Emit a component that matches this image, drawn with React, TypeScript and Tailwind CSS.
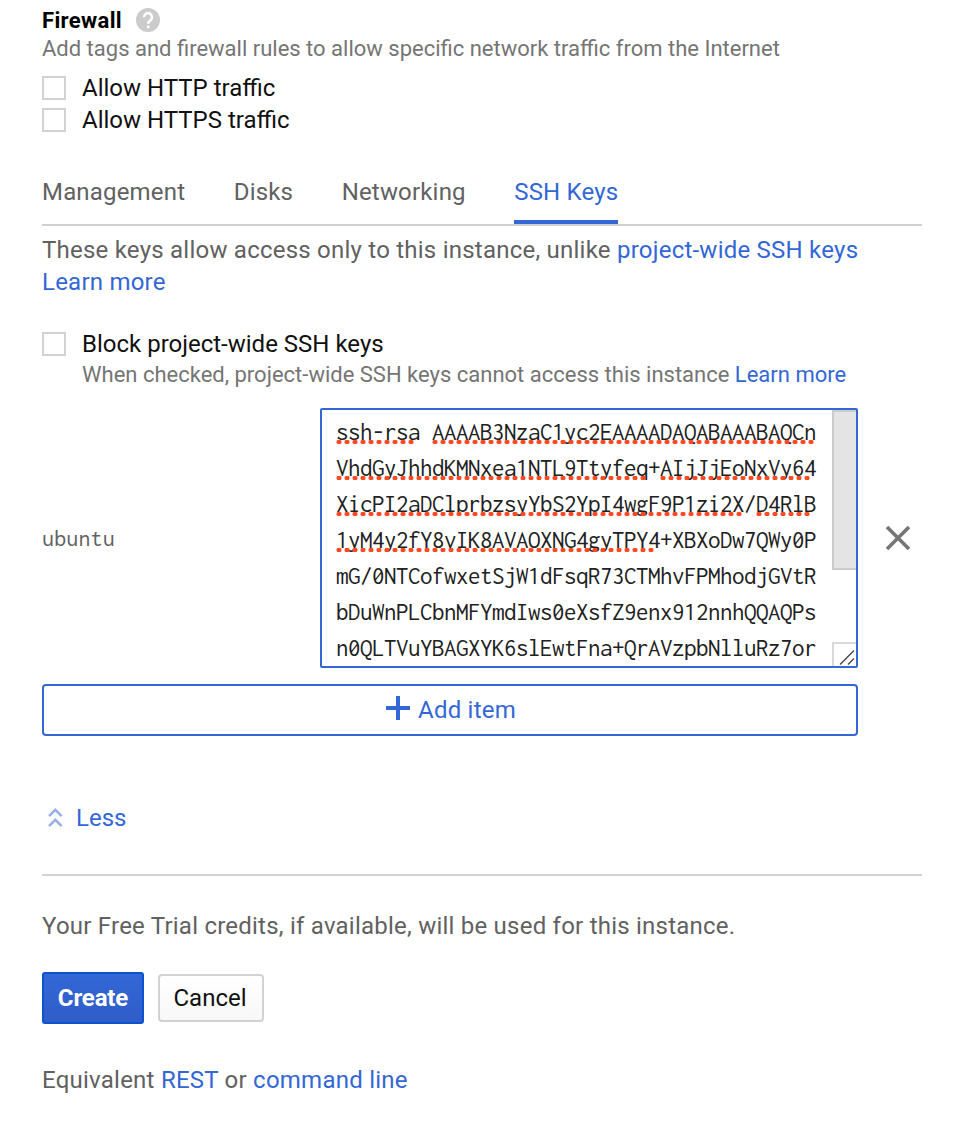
import React from 'react'

type Mark = { left: string; width: string }

const keyLines: { text: string; marks: Mark[] }[] = [
  {
    text: 'ssh-rsa AAAAB3NzaC1yc2EAAAADAQABAAABAQCn',
    marks: [
      { left: 'left-0', width: 'w-[80px]' },
      { left: 'left-[96px]', width: 'w-[384px]' },
    ],
  },
  {
    text: 'VhdGyJhhdKMNxea1NTL9Ttyfeq+AIjJjEoNxVy64',
    marks: [
      { left: 'left-0', width: 'w-[312px]' },
      { left: 'left-[324px]', width: 'w-[152px]' },
    ],
  },
  {
    text: 'XicPI2aDClprbzsyYbS2YpI4wgF9P1zi2X/D4RlB',
    marks: [
      { left: 'left-0', width: 'w-[408px]' },
      { left: 'left-[420px]', width: 'w-[56px]' },
    ],
  },
  {
    text: '1yM4y2fY8vIK8AVAOXNG4gyTPY4+XBXoDw7QWy0P',
    marks: [{ left: 'left-0', width: 'w-[320px]' }],
  },
  { text: 'mG/0NTCofwxetSjW1dFsqR73CTMhvFPMhodjGVtR', marks: [] },
  { text: 'bDuWnPLCbnMFYmdIws0eXsfZ9enx912nnhQQAQPs', marks: [] },
  { text: 'n0QLTVuYBAGXYK6slEwtFna+QrAVzpbNlluRz7or', marks: [] },
]

function Checkbox() {
  return <span className="h-6 w-6 shrink-0 border-2 border-[#d2d2d2] bg-white" />
}

function Link({ children }: { children: React.ReactNode }) {
  return (
    <a href="#" className="text-[#3367d6]">
      {children}
    </a>
  )
}

function HelpIcon() {
  return (
    <svg width="24" height="24" viewBox="0 0 24 24" className="-mt-0.5 ml-[14px]">
      <circle cx="12" cy="12" r="12" fill="#cbcbcb" />
      <path d="M8 9.2a4 4 0 1 1 6.7 2.9c-1.6 1.3-2.5 1.8-2.5 3.6" fill="none" stroke="#fff" strokeWidth="2.5" />
      <rect x="10.9" y="17.6" width="2.6" height="2.6" fill="#fff" />
    </svg>
  )
}

function SshKeyField() {
  return (
    <div className="relative h-[260px] w-[538px] overflow-hidden rounded-[2px] border-2 border-[#3367d6] bg-white pl-[14px] pt-1">
      <div className="font-['Inconsolata','Noto_Sans_Mono_CJK_SC',monospace] text-[25px] leading-9 tracking-[-0.5px] text-[#212121]">
        {keyLines.map((line) => (
          <div key={line.text} className="relative h-9 whitespace-pre">
            {line.text}
            {line.marks.map((m) => (
              <span
                key={m.left}
                className={`absolute top-[26px] h-1 bg-[radial-gradient(circle_at_3px_2px,#ff4a1f_2px,transparent_3px)] bg-[length:8px_4px] ${m.left} ${m.width}`}
              />
            ))}
          </div>
        ))}
      </div>
      <div className="absolute right-0 top-0 h-[160px] w-6 border-2 border-r-0 border-[#cbcbcb] bg-[#e4e4e4]" />
      <div className="absolute bottom-0 right-0 h-6 w-6 border-l-2 border-t-2 border-[#d9d9d9] bg-white">
        <svg width="22" height="22" viewBox="0 0 22 22">
          <path d="M6 20.500 20 6.500M14 20.500l6-6" stroke="#444" strokeWidth="1.300" />
        </svg>
      </div>
    </div>
  )
}

export default function App() {
  return (
    <main className="h-[1140px] w-[960px] overflow-hidden bg-white pl-[42px] pr-[38px] pt-[5px] font-['Roboto',sans-serif] text-[24px] leading-8 text-[#616161]">
      <section>
        <div className="flex h-8 items-center text-[22px] font-bold tracking-[0.35px] text-black">
          Firewall
          <HelpIcon />
        </div>
        <p className="h-6 text-[22px] leading-6 text-[#757575]">
          Add tags and firewall rules to allow specific network traffic from the Internet
        </p>
        <div className="mt-[11px] text-[#111]">
          <label className="flex h-8 items-center gap-4">
            <Checkbox />
            Allow HTTP traffic
          </label>
          <label className="flex h-8 items-center gap-4">
            <Checkbox />
            Allow HTTPS traffic
          </label>
        </div>
      </section>

      <nav className="mt-10 flex h-[50px] gap-[48.5px] border-b-2 border-[#d0d0d0] tracking-[0.18px]">
        <span className="h-12">Management</span>
        <span className="h-12">Disks</span>
        <span className="h-12">Networking</span>
        <span className="h-12 border-b-4 border-[#3367d6] text-[#3367d6]">SSH Keys</span>
      </nav>

      <section>
        <p className="mt-2 whitespace-nowrap tracking-[0.23px]">
          These keys allow access only to this instance, unlike <Link>project-wide SSH keys</Link>
          <br />
          <Link>Learn more</Link>
        </p>
        <label className="mt-[30px] flex h-8 items-center gap-4 text-[#111]">
          <Checkbox />
          Block project-wide SSH keys
        </label>
        <p className="ml-10 mt-[3px] h-6 whitespace-nowrap text-[22px] leading-6 text-[#757575]">
          When checked, project-wide SSH keys cannot access this instance <Link>Learn more</Link>
        </p>
        <div className="mt-[21px] flex items-center">
          <span className="w-[278px] font-['Inconsolata','Noto_Sans_Mono_CJK_SC',monospace] text-[24px] tracking-[0.15px]">
            ubuntu
          </span>
          <SshKeyField />
          <svg width="26" height="26" viewBox="0 0 26 26" className="ml-[27px]">
            <path d="M2 2l22 22M24 2 2 24" stroke="#757575" strokeWidth="3.6" />
          </svg>
        </div>
        <button className="mt-4 flex h-[52px] w-[816px] items-center justify-center gap-2 rounded-[4px] border-2 border-[#3367d6] pl-0.5 tracking-[0.22px] text-[#3367d6]">
          <svg width="24" height="24" viewBox="0 0 24 24" className="-mt-1">
            <path d="M12 0v24M0 12h24" stroke="#3367d6" strokeWidth="4" />
          </svg>
          Add item
        </button>
      </section>

      <div className="mt-[66px] flex h-8 items-center pl-1.5 text-[#3367d6]">
        <svg width="15" height="20" viewBox="0 0 15 20" className="mr-[13px]">
          <path d="M1 8.2l6.300-6.400 6.300 6.400M1 18.2l6.300-6.400 6.300 6.400" fill="none" stroke="#95b0ec" strokeWidth="2.4" />
        </svg>
        Less
      </div>
      <hr className="mt-10 border-t-2 border-[#d2d2d2]" />

      <p className="mt-[34px] tracking-[0.23px]">
        Your Free Trial credits, if available, will be used for this instance.
      </p>
      <div className="mt-[30px] flex items-center gap-[14px]">
        <button className="h-[52px] w-[102px] rounded-[3px] border-2 border-[#0d52cf] bg-linear-to-b from-[#3367d6] to-[#2f5dc8] font-bold tracking-[-0.15px] text-white">
          Create
        </button>
        <button className="h-12 w-[106px] rounded-[4px] border-2 border-[#d2d2d2] bg-linear-to-b from-white to-[#f8f8f8] pr-0.5 text-[#111]">
          Cancel
        </button>
      </div>
      <p className="mt-10 tracking-[0.24px]">
        Equivalent <Link>REST</Link> or <Link>command line</Link>
      </p>
    </main>
  )
}
